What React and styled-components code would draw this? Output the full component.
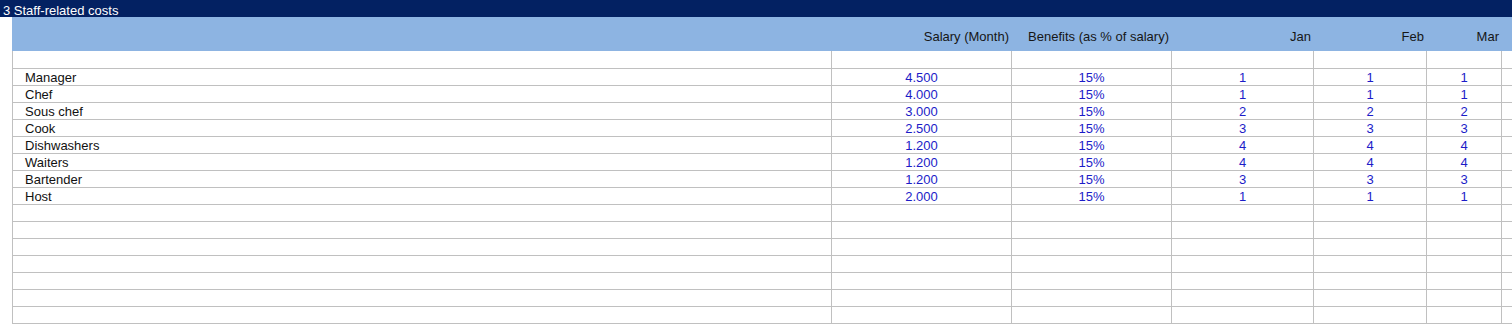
import React from 'react';
import styled, { createGlobalStyle } from 'styled-components';

const GlobalStyle = createGlobalStyle`
  body {
    margin: 0;
    background: #fff;
    font-family: 'Liberation Sans', Arial, sans-serif;
    font-size: 13px;
  }
`;

const COLUMNS = '819px 180px 160px 142px 113px 75px 1fr';

const staff = [
  { role: 'Manager', salary: '4.500', benefits: '15%', jan: 1, feb: 1, mar: 1 },
  { role: 'Chef', salary: '4.000', benefits: '15%', jan: 1, feb: 1, mar: 1 },
  { role: 'Sous chef', salary: '3.000', benefits: '15%', jan: 2, feb: 2, mar: 2 },
  { role: 'Cook', salary: '2.500', benefits: '15%', jan: 3, feb: 3, mar: 3 },
  { role: 'Dishwashers', salary: '1.200', benefits: '15%', jan: 4, feb: 4, mar: 4 },
  { role: 'Waiters', salary: '1.200', benefits: '15%', jan: 4, feb: 4, mar: 4 },
  { role: 'Bartender', salary: '1.200', benefits: '15%', jan: 3, feb: 3, mar: 3 },
  { role: 'Host', salary: '2.000', benefits: '15%', jan: 1, feb: 1, mar: 1 },
];

const EMPTY_ROWS = 7;

class App extends React.Component {
  render() {
    return (
      <Page>
        <GlobalStyle />
        <TitleBar>3 Staff-related costs</TitleBar>
        <Sheet>
          <HeaderRow>
            <HeadCell />
            <HeadCell>Salary (Month)</HeadCell>
            <HeadCell>Benefits (as % of salary)</HeadCell>
            <HeadCell>Jan</HeadCell>
            <HeadCell>Feb</HeadCell>
            <HeadCell>Mar</HeadCell>
            <HeadCell />
          </HeaderRow>
          <Row first>
            {Array.from({ length: 7 }).map((_, i) => (
              <Cell key={i} />
            ))}
          </Row>
          {staff.map(item => (
            <Row key={item.role}>
              <LabelCell>{item.role}</LabelCell>
              <Cell input>{item.salary}</Cell>
              <Cell input>{item.benefits}</Cell>
              <Cell input>{item.jan}</Cell>
              <Cell input>{item.feb}</Cell>
              <Cell input>{item.mar}</Cell>
              <Cell />
            </Row>
          ))}
          {Array.from({ length: EMPTY_ROWS }).map((_, r) => (
            <Row key={`empty-${r}`} last={r === EMPTY_ROWS - 1}>
              {Array.from({ length: 7 }).map((_, i) => (
                <Cell key={i} />
              ))}
            </Row>
          ))}
        </Sheet>
      </Page>
    );
  }
}

export default App;

const Page = styled.div`
  width: 1512px;
  height: 329px;
  overflow: hidden;
  background: #fff;
`;

const TitleBar = styled.div`
  box-sizing: border-box;
  height: 17px;
  padding: 3px 0 0 3px;
  line-height: 15px;
  background: #032162;
  color: #fff;
  white-space: nowrap;
`;

const Sheet = styled.div`
  margin-left: 12px;
`;

const HeaderRow = styled.div`
  display: grid;
  grid-template-columns: ${COLUMNS};
  height: 34px;
  background: #8db4e2;
`;

const HeadCell = styled.div`
  display: flex;
  align-items: center;
  justify-content: flex-end;
  padding: 4px 2px 0 0;
  color: #161616;
  white-space: nowrap;
`;

const Row = styled.div`
  display: grid;
  grid-template-columns: ${COLUMNS};
  box-sizing: border-box;
  height: ${({ last }) => (last ? 18 : 17)}px;
  border-top: ${({ first }) => (first ? 'none' : '1px solid #c0c0c0')};
  border-bottom: ${({ last }) => (last ? '1px solid #c0c0c0' : 'none')};
`;

const Cell = styled.div`
  border-left: 1px solid #c0c0c0;
  display: flex;
  align-items: center;
  justify-content: center;
  line-height: 15px;
  color: ${({ input }) => (input ? '#1c1cc8' : '#111')};
  white-space: nowrap;
`;

const LabelCell = styled(Cell)`
  justify-content: flex-start;
  padding-left: 12px;
  color: #111;
`;
